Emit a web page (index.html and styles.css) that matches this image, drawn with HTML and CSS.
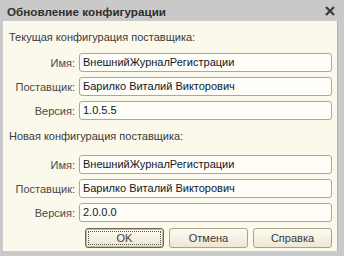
FILE: index.html
```html
<!DOCTYPE html>
<html lang="ru">
<head>
<meta charset="utf-8">
<title>Обновление конфигурации</title>
<link rel="stylesheet" href="styles.css">
</head>
<body>
<div class="window">
  <div class="titlebar">
    <span class="title">Обновление конфигурации</span>
    <svg class="close" width="10" height="10" viewBox="0 0 10 10"><path d="M1 1 L9 9 M9 1 L1 9" stroke="#3a3a3a" stroke-width="2.2" fill="none"/></svg>
  </div>
  <div class="client">
    <div class="section-title first">Текущая конфигурация поставщика:</div>
    <div class="rows">
      <div class="row"><span class="label">Имя:</span><div class="field">ВнешнийЖурналРегистрации</div></div>
      <div class="row"><span class="label">Поставщик:</span><div class="field">Барилко Виталий Викторович</div></div>
      <div class="row"><span class="label">Версия:</span><div class="field">1.0.5.5</div></div>
    </div>
    <div class="section-title second">Новая конфигурация поставщика:</div>
    <div class="rows rows-second">
      <div class="row"><span class="label">Имя:</span><div class="field">ВнешнийЖурналРегистрации</div></div>
      <div class="row"><span class="label">Поставщик:</span><div class="field">Барилко Виталий Викторович</div></div>
      <div class="row"><span class="label">Версия:</span><div class="field">2.0.0.0</div></div>
    </div>
    <div class="buttons">
      <button class="btn default"><span class="focus">OK</span></button>
      <button class="btn">Отмена</button>
      <button class="btn">Справка</button>
    </div>
  </div>
</div>
</body>
</html>
```

FILE: styles.css
```css
html, body {
  margin: 0;
  padding: 0;
  background: #c9c9c9;
}
.window {
  width: 344px;
  height: 256px;
  background: #c9c9c9;
  display: flex;
  flex-direction: column;
  font-family: "Liberation Sans", Arial, sans-serif;
  font-size: 11px;
  box-sizing: border-box;
}
.titlebar {
  height: 21px;
  flex: none;
  display: flex;
  align-items: center;
  justify-content: space-between;
  padding: 1px 9px 0 7px;
  box-sizing: border-box;
}
.title {
  font-weight: bold;
  color: #2f2f2f;
  font-size: 11.7px;
}
.close {
  display: block;
}
.client {
  flex: 1;
  margin: 0 6px 6px 3px;
  background: #fbf9ec;
  padding: 8px 5px 3px 5px;
  display: flex;
  flex-direction: column;
  border-right: 1px solid #b0b0b0;
}
.section-title {
  line-height: 16px;
  height: 16px;
  color: #3a3a3a;
  padding-left: 1px;
}
.section-title.second {
  margin-top: 8px;
}
.rows {
  margin-top: 8px;
  display: flex;
  flex-direction: column;
  gap: 5px;
}
.rows-second {
  margin-top: 11px;
}
.row {
  display: grid;
  grid-template-columns: 67px 1fr;
  column-gap: 4px;
  align-items: center;
  height: 19px;
}
.label {
  text-align: right;
  color: #4a4a4a;
}
.field {
  height: 19px;
  box-sizing: border-box;
  border: 1px solid #b3a786;
  border-radius: 3px;
  background: #fefdf7;
  padding: 0 3px;
  line-height: 17px;
  color: #101828;
  white-space: nowrap;
  overflow: hidden;
}
.buttons {
  margin-top: 6px;
  display: flex;
  justify-content: flex-end;
  gap: 5px;
}
.btn {
  width: 79px;
  height: 20px;
  box-sizing: border-box;
  border: 1px solid #ada283;
  border-radius: 3px;
  background: linear-gradient(#fdfbf2, #ede7d2);
  font-family: "Liberation Sans", Arial, sans-serif;
  font-size: 11px;
  color: #3a3a3a;
  padding: 0;
  display: flex;
  align-items: center;
  justify-content: center;
}
.btn.default {
  border: 1px solid #6d6650;
  box-shadow: inset 0 0 0 1px #c8bd9c;
  padding: 2px;
}
.focus {
  flex: 1;
  align-self: stretch;
  border: 1px dotted #555;
  display: flex;
  align-items: center;
  justify-content: center;
}
```
